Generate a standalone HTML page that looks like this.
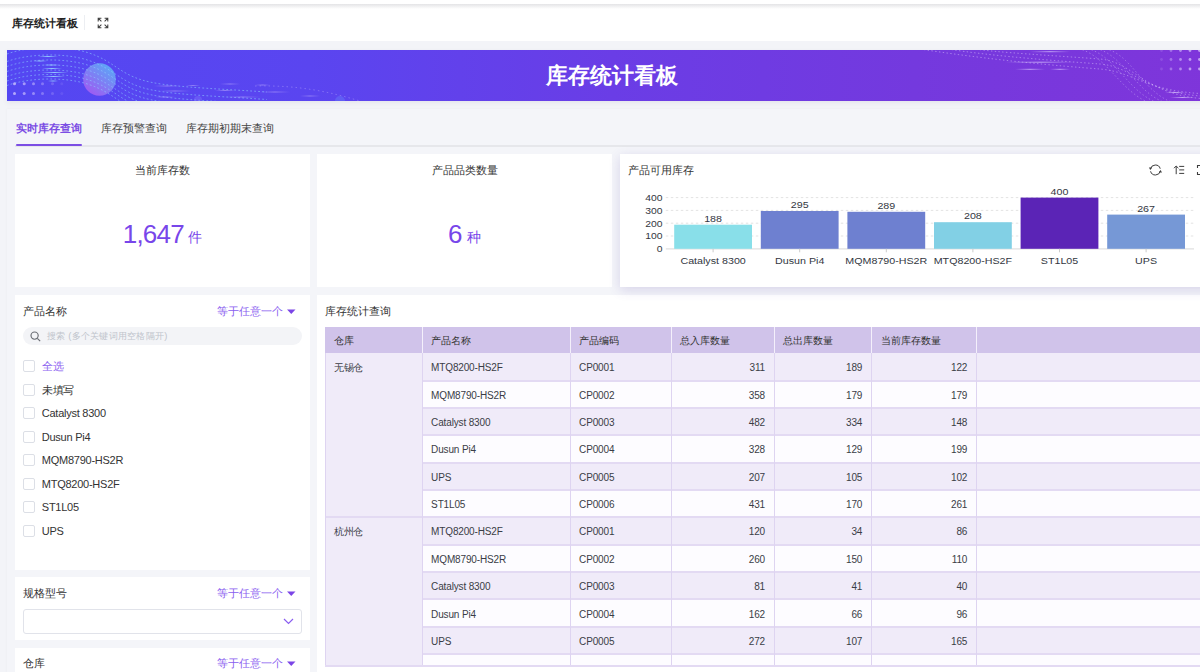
<!DOCTYPE html>
<html><head><meta charset="utf-8">
<style>
*{margin:0;padding:0;box-sizing:border-box}
html,body{width:1200px;height:672px;overflow:hidden}
body{position:relative;background:#f3f4f8;font-family:"Liberation Sans",sans-serif;color:#333}
.a{position:absolute}
.hdr{left:0;top:0;width:1200px;height:41px;background:#fff}
.hdr .sh{left:0;top:4px;width:1200px;height:5px;background:linear-gradient(#e4e4e6,#fff)}
.htitle{left:12px;top:14.5px;font-size:11px;font-weight:bold;color:#222;line-height:16px;white-space:nowrap}
.hdiv{left:84px;top:15px;width:1px;height:15px;background:#eceef2}
.banner{left:7px;top:50px;width:1210px;height:51px;background:linear-gradient(90deg,#5447f2 0%,#5a45f0 25%,#6a3de6 50%,#7439de 75%,#7f35da 100%);overflow:hidden;box-shadow:0 2px 5px rgba(60,60,90,.08)}
.btitle{left:0;top:0;width:1210px;text-align:center;line-height:51px;font-size:22px;font-weight:bold;color:#fff;letter-spacing:0}
.panel{left:7px;top:108.5px;width:1200px;height:570px;background:#f4f5f9;box-shadow:0 0 3px rgba(0,0,0,.04)}
.tab{top:120px;font-size:11px;line-height:16px;color:#444;white-space:nowrap}
.tabline{left:15px;top:145px;width:1190px;height:2px;background:#e6e7eb}
.tabact{left:16px;top:144px;width:66px;height:2px;background:#7c4ee4;border-radius:1px}
.card{background:#fff}
.ctitle{font-size:11px;line-height:16px;color:#333;text-align:center;white-space:nowrap}
.big{color:#7846ea;white-space:nowrap;text-align:center}


.tbl{overflow:hidden}
.th{background:#d0c3ea}
.tht{font-size:10px;line-height:26.2px;color:#333;white-space:nowrap;padding-top:1.5px;margin-left:-0.5px}
.thd{width:1px;background:#f4f0fb}
.td{font-size:10px;line-height:27.4px;color:#3a3d46;white-space:nowrap;letter-spacing:-0.15px;padding-top:1.5px}
.num{text-align:right}
.hl{height:2px;background:#e3daf3}
.vl{width:1px;background:#ded4f1}
.cb{width:12px;height:12px;border:1px solid #dcdfe6;border-radius:2px;background:#fff}
.ci{font-size:11px;line-height:16px;color:#333;white-space:nowrap;letter-spacing:-0.25px}
.ftitle{font-size:11px;line-height:16px;color:#333;white-space:nowrap}
.fop{font-size:11px;line-height:16px;color:#8a5ef0;white-space:nowrap}
.purple{color:#8a5ef0!important}
.td:not(.num){margin-left:-0.7px}
</style></head><body>
<div class="a hdr">
  <div class="a sh"></div>
  <div class="a htitle">库存统计看板</div>
  <div class="a hdiv"></div>
  <svg class="a" style="left:97px;top:16.8px" width="12" height="12" viewBox="0 0 12 12" fill="none" stroke="#404040" stroke-width="1.05">
    <path d="M1.2 4.4V1.2h3.2M1.4 1.4l3 3M10.8 4.4V1.2H7.6M10.6 1.4l-3 3M1.2 7.6v3.2h3.2M1.4 10.6l3-3M10.8 7.6v3.2H7.6M10.6 10.6l-3-3"/>
  </svg>
</div>

<div class="a banner">
<svg class="a" style="left:0;top:0" width="1210" height="51" viewBox="0 0 1210 51">
<defs><linearGradient id="sph" x1="0.8" y1="0.1" x2="0.2" y2="0.9"><stop offset="0" stop-color="#5ea4f6"/><stop offset="1" stop-color="#9d5cf2"/></linearGradient><linearGradient id="stk" x1="0" x2="1"><stop offset="0" stop-color="#9ad8ff" stop-opacity="0"/><stop offset="0.5" stop-color="#9ad8ff" stop-opacity="0.9"/><stop offset="1" stop-color="#9ad8ff" stop-opacity="0"/></linearGradient><linearGradient id="stk2" x1="0" x2="1"><stop offset="0" stop-color="#d8c8ff" stop-opacity="0"/><stop offset="0.5" stop-color="#e0d0ff" stop-opacity="0.7"/><stop offset="1" stop-color="#d8c8ff" stop-opacity="0"/></linearGradient></defs>
<circle cx="92.5" cy="29.5" r="16.3" fill="url(#sph)"/>
<path d="M0 4.0 C 22 -4.0, 58 -5.0, 82 3.0 S 112 23.0, 135 30.0 S 200 38.0, 260 42.0" fill="none" stroke="#8fd2ff" stroke-opacity="0.6" stroke-width="0.9" stroke-dasharray="1.8 2.2"/>
<path d="M0 11.5 C 22 3.5, 58 2.5, 82 10.5 S 112 30.5, 135 37.5 S 200 45.5, 260 49.5" fill="none" stroke="#8fd2ff" stroke-opacity="0.6" stroke-width="0.9" stroke-dasharray="1.8 2.2"/>
<path d="M0 16.5 C 22 8.5, 58 7.5, 82 15.5 S 112 35.5, 135 42.5 S 200 50.5, 260 54.5" fill="none" stroke="#8fd2ff" stroke-opacity="0.6" stroke-width="0.9" stroke-dasharray="1.8 2.2"/>
<path d="M0 21.5 C 22 13.5, 58 12.5, 82 20.5 S 112 40.5, 135 47.5 S 200 55.5, 260 59.5" fill="none" stroke="#8fd2ff" stroke-opacity="0.6" stroke-width="0.9" stroke-dasharray="1.8 2.2"/>
<path d="M0 26.5 C 22 18.5, 58 17.5, 82 25.5 S 112 45.5, 135 52.5 S 200 60.5, 260 64.5" fill="none" stroke="#8fd2ff" stroke-opacity="0.6" stroke-width="0.9" stroke-dasharray="1.8 2.2"/>
<path d="M0 31.0 C 22 23.0, 58 22.0, 82 30.0 S 112 50.0, 135 57.0 S 200 65.0, 260 69.0" fill="none" stroke="#8fd2ff" stroke-opacity="0.6" stroke-width="0.9" stroke-dasharray="1.8 2.2"/>
<path d="M0 35.5 C 22 27.5, 58 26.5, 82 34.5 S 112 54.5, 135 61.5 S 200 69.5, 260 73.5" fill="none" stroke="#8fd2ff" stroke-opacity="0.6" stroke-width="0.9" stroke-dasharray="1.8 2.2"/>
<rect x="31" y="6.0" width="20" height="1" fill="url(#stk)"/>
<rect x="26" y="10.5" width="14" height="1" fill="url(#stk)"/>
<rect x="36" y="14.5" width="17" height="1" fill="url(#stk)"/>
<rect x="35" y="18.0" width="20" height="1" fill="url(#stk)"/>
<rect x="34" y="22.0" width="27" height="1" fill="url(#stk)"/>
<rect x="35" y="26.0" width="23" height="1" fill="url(#stk)"/>
<rect x="41" y="30.5" width="10" height="1" fill="url(#stk)"/>
<circle cx="7.5" cy="33.8" r="1.5" fill="#e6dcff" fill-opacity="0.65"/>
<circle cx="17.2" cy="33.8" r="1.5" fill="#e6dcff" fill-opacity="0.55"/>
<circle cx="26.5" cy="33.8" r="1.5" fill="#e6dcff" fill-opacity="0.45"/>
<circle cx="35.5" cy="33.8" r="1.5" fill="#e6dcff" fill-opacity="0.32"/>
<circle cx="45.5" cy="33.8" r="1.5" fill="#e6dcff" fill-opacity="0.2"/>
<circle cx="54.8" cy="33.8" r="1.5" fill="#e6dcff" fill-opacity="0.1"/>
<circle cx="7.5" cy="43.5" r="1.5" fill="#e6dcff" fill-opacity="0.65"/>
<circle cx="17.2" cy="43.5" r="1.5" fill="#e6dcff" fill-opacity="0.55"/>
<circle cx="26.5" cy="43.5" r="1.5" fill="#e6dcff" fill-opacity="0.45"/>
<circle cx="35.5" cy="43.5" r="1.5" fill="#e6dcff" fill-opacity="0.32"/>
<circle cx="45.5" cy="43.5" r="1.5" fill="#e6dcff" fill-opacity="0.2"/>
<circle cx="54.8" cy="43.5" r="1.5" fill="#e6dcff" fill-opacity="0.1"/>
<rect x="147" y="35.5" width="26" height="1" fill="url(#stk2)" opacity="0.6"/>
<rect x="179" y="35.0" width="14" height="1" fill="url(#stk2)" opacity="0.6"/>
<rect x="213" y="33.5" width="20" height="1" fill="url(#stk2)" opacity="0.6"/>
<rect x="248" y="34.5" width="15" height="1" fill="url(#stk2)" opacity="0.6"/>
<rect x="153" y="40.5" width="30" height="1" fill="url(#stk2)" opacity="0.6"/>
<rect x="208" y="40.0" width="20" height="1" fill="url(#stk2)" opacity="0.6"/>
<rect x="253" y="41.5" width="30" height="1" fill="url(#stk2)" opacity="0.6"/>
<rect x="148" y="46.5" width="20" height="1" fill="url(#stk2)" opacity="0.6"/>
<rect x="218" y="46.5" width="35" height="1" fill="url(#stk2)" opacity="0.6"/>
<rect x="293" y="45.5" width="20" height="1" fill="url(#stk2)" opacity="0.6"/>
<path d="M248 36 C 293 35, 323 42, 353 51" fill="none" stroke="#c8b8ff" stroke-opacity="0.45" stroke-width="0.8" stroke-dasharray="1.5 3"/>
<circle cx="191" cy="50" r="4" fill="#8a7cff" fill-opacity="0.35"/>
<circle cx="333" cy="51" r="5" fill="#6a8cff" fill-opacity="0.35"/>
<path d="M913 -1 C 983 10, 1053 16, 1093 19 C 1128 22, 1138 42.0, 1203 44.0" fill="none" stroke="#e6d8ff" stroke-opacity="0.55" stroke-width="0.8" stroke-dasharray="1.4 2.4"/>
<path d="M941 -1 C 983 6, 1053 11, 1093 14 C 1128 17, 1138 44.5, 1203 46.5" fill="none" stroke="#e6d8ff" stroke-opacity="0.55" stroke-width="0.8" stroke-dasharray="1.4 2.4"/>
<path d="M969 -1 C 983 2, 1053 6, 1093 9 C 1128 12, 1138 47.0, 1203 49.0" fill="none" stroke="#e6d8ff" stroke-opacity="0.55" stroke-width="0.8" stroke-dasharray="1.4 2.4"/>
<path d="M1068 -2 C 1098 2, 1113 42, 1143 53" fill="none" stroke="#e6d8ff" stroke-opacity="0.45" stroke-width="0.8" stroke-dasharray="1.4 2.4"/>
<path d="M1077 -2 C 1107 2, 1120 42, 1151 53" fill="none" stroke="#e6d8ff" stroke-opacity="0.45" stroke-width="0.8" stroke-dasharray="1.4 2.4"/>
<path d="M1086 -2 C 1116 2, 1127 42, 1159 53" fill="none" stroke="#e6d8ff" stroke-opacity="0.45" stroke-width="0.8" stroke-dasharray="1.4 2.4"/>
<path d="M1095 -2 C 1125 2, 1134 42, 1167 53" fill="none" stroke="#e6d8ff" stroke-opacity="0.45" stroke-width="0.8" stroke-dasharray="1.4 2.4"/>
<rect x="1023" y="1.2" width="40" height="1" fill="url(#stk2)"/>
<rect x="998" y="11.7" width="70" height="1" fill="url(#stk2)"/>
<rect x="1008" y="18.8" width="30" height="1" fill="url(#stk2)"/>
<rect x="1043" y="18.8" width="20" height="1" fill="url(#stk2)"/>
<rect x="1158" y="42.0" width="20" height="1" fill="url(#stk2)"/>
<rect x="1163" y="47.0" width="25" height="1" fill="url(#stk2)"/>
<circle cx="1154.5" cy="0.5" r="1.4" fill="#e8dcff" fill-opacity="0.15"/>
<circle cx="1164" cy="0.5" r="1.4" fill="#e8dcff" fill-opacity="0.35"/>
<circle cx="1173.5" cy="0.5" r="1.4" fill="#e8dcff" fill-opacity="0.5"/>
<circle cx="1183" cy="0.5" r="1.4" fill="#e8dcff" fill-opacity="0.6"/>
<circle cx="1192.5" cy="0.5" r="1.4" fill="#e8dcff" fill-opacity="0.65"/>
<circle cx="1154.5" cy="9.5" r="1.4" fill="#e8dcff" fill-opacity="0.15"/>
<circle cx="1164" cy="9.5" r="1.4" fill="#e8dcff" fill-opacity="0.35"/>
<circle cx="1173.5" cy="9.5" r="1.4" fill="#e8dcff" fill-opacity="0.5"/>
<circle cx="1183" cy="9.5" r="1.4" fill="#e8dcff" fill-opacity="0.6"/>
<circle cx="1192.5" cy="9.5" r="1.4" fill="#e8dcff" fill-opacity="0.65"/>
<circle cx="1154.5" cy="19" r="1.4" fill="#e8dcff" fill-opacity="0.15"/>
<circle cx="1164" cy="19" r="1.4" fill="#e8dcff" fill-opacity="0.35"/>
<circle cx="1173.5" cy="19" r="1.4" fill="#e8dcff" fill-opacity="0.5"/>
<circle cx="1183" cy="19" r="1.4" fill="#e8dcff" fill-opacity="0.6"/>
<circle cx="1192.5" cy="19" r="1.4" fill="#e8dcff" fill-opacity="0.65"/>
</svg>
  <div class="a btitle">库存统计看板</div>
</div>

<div class="a panel"></div>
<div class="a tab" style="left:16px;color:#7c4ee4;font-weight:bold">实时库存查询</div>
<div class="a tab" style="left:101px">库存预警查询</div>
<div class="a tab" style="left:186px">库存期初期末查询</div>
<div class="a tabline"></div>
<div class="a tabact"></div>

<!-- card 1 -->
<div class="a card" style="left:15px;top:154px;width:295px;height:133px">
  <div class="a ctitle" style="left:0;top:8px;width:295px">当前库存数</div>
  <div class="a big" style="left:0;top:65px;width:295px"><span style="font-size:26px;letter-spacing:-0.8px">1,647</span> <span style="font-size:14px;position:relative;top:-1px">件</span></div>
</div>
<!-- card 2 -->
<div class="a card" style="left:317px;top:154px;width:295px;height:133px">
  <div class="a ctitle" style="left:0;top:8px;width:295px">产品品类数量</div>
  <div class="a big" style="left:0;top:65px;width:295px"><span style="font-size:26px">6</span> <span style="font-size:14px;position:relative;top:-1px">种</span></div>
</div>
<!-- chart card -->
<div class="a card" style="left:620px;top:154px;width:600px;height:133px;box-shadow:0 3px 11px rgba(90,70,170,.19);z-index:2">
  <div class="a" style="left:8px;top:8px;font-size:11px;line-height:16px;white-space:nowrap">产品可用库存</div>
<svg class="a" style="left:0;top:0" width="600" height="133" font-family="Liberation Sans, sans-serif" fill="#33373f">
<line x1="45.799999999999955" x2="574" y1="43.6" y2="43.6" stroke="#e3e3e3" stroke-width="1" stroke-dasharray="2.5 2.5"/>
<line x1="45.799999999999955" x2="574" y1="56.4" y2="56.4" stroke="#e3e3e3" stroke-width="1" stroke-dasharray="2.5 2.5"/>
<line x1="45.799999999999955" x2="574" y1="69.2" y2="69.2" stroke="#e3e3e3" stroke-width="1" stroke-dasharray="2.5 2.5"/>
<line x1="45.799999999999955" x2="574" y1="82.0" y2="82.0" stroke="#e3e3e3" stroke-width="1" stroke-dasharray="2.5 2.5"/>
<text transform="translate(42.60000000000002,47.0) scale(1.08,1)" text-anchor="end" font-size="9.6">400</text>
<text transform="translate(42.60000000000002,59.8) scale(1.08,1)" text-anchor="end" font-size="9.6">300</text>
<text transform="translate(42.60000000000002,72.6) scale(1.08,1)" text-anchor="end" font-size="9.6">200</text>
<text transform="translate(42.60000000000002,85.4) scale(1.08,1)" text-anchor="end" font-size="9.6">100</text>
<text transform="translate(42.60000000000002,98.2) scale(1.08,1)" text-anchor="end" font-size="9.6">0</text>
<line x1="45.799999999999955" x2="574" y1="94.8" y2="94.8" stroke="#e0e0e0" stroke-width="1.3"/>
<rect x="54.2" y="70.7" width="77.8" height="24.1" fill="#89dfe9"/>
<text transform="translate(93.1,67.9) scale(1.08,1)" text-anchor="middle" font-size="9.9">188</text>
<line x1="93.1" x2="93.1" y1="94.8" y2="98.3" stroke="#ccc" stroke-width="1"/>
<text transform="translate(93.1,109.9) scale(1.08,1)" text-anchor="middle" font-size="9.9">Catalyst 8300</text>
<rect x="140.8" y="57.0" width="77.8" height="37.8" fill="#6e80d0"/>
<text transform="translate(179.7,54.2) scale(1.08,1)" text-anchor="middle" font-size="9.9">295</text>
<line x1="179.7" x2="179.7" y1="94.8" y2="98.3" stroke="#ccc" stroke-width="1"/>
<text transform="translate(179.7,109.9) scale(1.08,1)" text-anchor="middle" font-size="9.9">Dusun Pi4</text>
<rect x="227.4" y="57.8" width="77.8" height="37.0" fill="#6e80d0"/>
<text transform="translate(266.3,55.0) scale(1.08,1)" text-anchor="middle" font-size="9.9">289</text>
<line x1="266.3" x2="266.3" y1="94.8" y2="98.3" stroke="#ccc" stroke-width="1"/>
<text transform="translate(266.3,109.9) scale(1.08,1)" text-anchor="middle" font-size="9.9">MQM8790-HS2R</text>
<rect x="314.0" y="68.2" width="77.8" height="26.6" fill="#82d0e5"/>
<text transform="translate(352.9,65.4) scale(1.08,1)" text-anchor="middle" font-size="9.9">208</text>
<line x1="352.9" x2="352.9" y1="94.8" y2="98.3" stroke="#ccc" stroke-width="1"/>
<text transform="translate(352.9,109.9) scale(1.08,1)" text-anchor="middle" font-size="9.9">MTQ8200-HS2F</text>
<rect x="400.6" y="43.6" width="77.8" height="51.2" fill="#5b24b6"/>
<text transform="translate(439.5,40.8) scale(1.08,1)" text-anchor="middle" font-size="9.9">400</text>
<line x1="439.5" x2="439.5" y1="94.8" y2="98.3" stroke="#ccc" stroke-width="1"/>
<text transform="translate(439.5,109.9) scale(1.08,1)" text-anchor="middle" font-size="9.9">ST1L05</text>
<rect x="487.2" y="60.6" width="77.8" height="34.2" fill="#7698d6"/>
<text transform="translate(526.1,57.8) scale(1.08,1)" text-anchor="middle" font-size="9.9">267</text>
<line x1="526.1" x2="526.1" y1="94.8" y2="98.3" stroke="#ccc" stroke-width="1"/>
<text transform="translate(526.1,109.9) scale(1.08,1)" text-anchor="middle" font-size="9.9">UPS</text>
</svg>
</div>


<svg class="a" style="left:1148px;top:163px;z-index:3" width="15" height="14" viewBox="0 0 15 14" fill="none" stroke="#3d3d3d" stroke-width="1">
  <path d="M2.48 6.13 A5 5 0 0 1 12.23 5.71"/>
  <path d="M12.32 7.87 A5 5 0 0 1 2.57 8.29"/>
  <path d="M0.9 4.6 L4 4.4 L2.3 6.9 Z" fill="#3d3d3d" stroke="none"/>
  <path d="M14 9.4 L10.9 9.6 L12.6 7.1 Z" fill="#3d3d3d" stroke="none"/>
</svg>
<svg class="a" style="left:1172px;top:164px;z-index:3" width="14" height="12" viewBox="0 0 14 12" fill="none" stroke="#3d3d3d" stroke-width="1">
  <path d="M4.2 10.2V2.2M2 4.2L4.2 2L6.4 4.2"/>
  <path d="M7.2 2.4h5M7.2 5.9h5M7.2 9.4h5"/>
</svg>
<svg class="a" style="left:1196px;top:164px;z-index:3" width="8" height="12" viewBox="0 0 8 12" fill="none" stroke="#3d3d3d" stroke-width="1.1">
  <path d="M1.5 4V1.5h3M1.5 8v2.5h3"/>
</svg>
<!-- filter panels -->
<div class="a card" style="left:15px;top:295px;width:295px;height:275px"></div>
<div class="a card" style="left:15px;top:577px;width:295px;height:63px"></div>
<div class="a card" style="left:15px;top:648px;width:295px;height:40px"></div>

<!-- table panel -->
<div class="a card" style="left:317px;top:295px;width:900px;height:390px"></div>


<!-- filter 1 -->
<div class="a ftitle" style="left:23px;top:303px">产品名称</div>
<div class="a fop" style="left:217px;top:303px">等于任意一个</div>
<svg class="a" style="left:287px;top:309px" width="9" height="6" viewBox="0 0 9 6"><path d="M0 0.5h8.5L4.25 5z" fill="#7b45e6"/></svg>
<div class="a" style="left:23px;top:327px;width:278.5px;height:18px;border-radius:9px;background:#f3f4f7"></div>
<svg class="a" style="left:30px;top:331px" width="11" height="11" viewBox="0 0 11 11" fill="none" stroke="#6a6d74" stroke-width="1.15"><circle cx="4.6" cy="4.6" r="3.6"/><path d="M7.3 7.3l2.9 2.9"/></svg>
<div class="a" style="left:47px;top:328.5px;font-size:9.4px;line-height:14px;color:#c0c4cc;letter-spacing:0.25px;white-space:nowrap">搜索 (多个关键词用空格隔开)</div>
<div class="a cb" style="left:23px;top:360.0px"></div>
<div class="a ci purple" style="left:41.8px;top:358.0px">全选</div>
<div class="a cb" style="left:23px;top:383.5px"></div>
<div class="a ci" style="left:41.8px;top:381.5px">未填写</div>
<div class="a cb" style="left:23px;top:407.0px"></div>
<div class="a ci" style="left:41.8px;top:405.0px">Catalyst 8300</div>
<div class="a cb" style="left:23px;top:430.5px"></div>
<div class="a ci" style="left:41.8px;top:428.5px">Dusun Pi4</div>
<div class="a cb" style="left:23px;top:454.0px"></div>
<div class="a ci" style="left:41.8px;top:452.0px">MQM8790-HS2R</div>
<div class="a cb" style="left:23px;top:477.5px"></div>
<div class="a ci" style="left:41.8px;top:475.5px">MTQ8200-HS2F</div>
<div class="a cb" style="left:23px;top:501.0px"></div>
<div class="a ci" style="left:41.8px;top:499.0px">ST1L05</div>
<div class="a cb" style="left:23px;top:524.5px"></div>
<div class="a ci" style="left:41.8px;top:522.5px">UPS</div>
<!-- filter 2 -->
<div class="a ftitle" style="left:23px;top:585px">规格型号</div>
<div class="a fop" style="left:217px;top:585px">等于任意一个</div>
<svg class="a" style="left:287px;top:591px" width="9" height="6" viewBox="0 0 9 6"><path d="M0 0.5h8.5L4.25 5z" fill="#7b45e6"/></svg>
<div class="a" style="left:23px;top:608.5px;width:278.5px;height:25px;border-radius:3px;border:1px solid #e1e3ea;background:#fff"></div>
<svg class="a" style="left:283px;top:618px" width="11" height="7" viewBox="0 0 11 7" fill="none" stroke="#8a5ef0" stroke-width="1.2"><path d="M1 1l4.5 4.5L10 1"/></svg>
<!-- filter 3 -->
<div class="a ftitle" style="left:23px;top:655px">仓库</div>
<div class="a fop" style="left:217px;top:655px">等于任意一个</div>
<svg class="a" style="left:287px;top:661px" width="9" height="6" viewBox="0 0 9 6"><path d="M0 0.5h8.5L4.25 5z" fill="#7b45e6"/></svg>
<!-- table -->
<div class="a" style="left:325px;top:303px;font-size:11px;line-height:16px;color:#333;white-space:nowrap">库存统计查询</div>
<div class="a tbl" style="left:325px;top:326.7px;width:885px;height:340.3px">
<div class="a th" style="left:0;top:0;width:885px;height:26.2px"></div>
<div class="a tht" style="left:9.4px;top:0;height:26.2px">仓库</div>
<div class="a tht" style="left:106.8px;top:0;height:26.2px">产品名称</div>
<div class="a tht" style="left:254.8px;top:0;height:26.2px">产品编码</div>
<div class="a tht" style="left:355.9px;top:0;height:26.2px">总入库数量</div>
<div class="a tht" style="left:458.8px;top:0;height:26.2px">总出库数量</div>
<div class="a tht" style="left:556.1px;top:0;height:26.2px">当前库存数量</div>
<div class="a thd" style="left:96.9px;top:0;height:26.2px"></div>
<div class="a thd" style="left:244.9px;top:0;height:26.2px"></div>
<div class="a thd" style="left:346.0px;top:0;height:26.2px"></div>
<div class="a thd" style="left:448.9px;top:0;height:26.2px"></div>
<div class="a thd" style="left:546.2px;top:0;height:26.2px"></div>
<div class="a thd" style="left:651.2px;top:0;height:26.2px"></div>
<div class="a tr" style="left:97.4px;top:26.20px;width:787.6px;height:27.35px;background:#f0ebf9"></div>
<div class="a td" style="left:106.8px;top:26.20px;height:27.35px">MTQ8200-HS2F</div>
<div class="a td" style="left:254.8px;top:26.20px;height:27.35px">CP0001</div>
<div class="a td num" style="left:346.5px;top:26.20px;width:93.5px;height:27.35px">311</div>
<div class="a td num" style="left:449.4px;top:26.20px;width:87.9px;height:27.35px">189</div>
<div class="a td num" style="left:546.7px;top:26.20px;width:95.6px;height:27.35px">122</div>
<div class="a tr" style="left:97.4px;top:53.55px;width:787.6px;height:27.35px;background:#fdfcff"></div>
<div class="a td" style="left:106.8px;top:53.55px;height:27.35px">MQM8790-HS2R</div>
<div class="a td" style="left:254.8px;top:53.55px;height:27.35px">CP0002</div>
<div class="a td num" style="left:346.5px;top:53.55px;width:93.5px;height:27.35px">358</div>
<div class="a td num" style="left:449.4px;top:53.55px;width:87.9px;height:27.35px">179</div>
<div class="a td num" style="left:546.7px;top:53.55px;width:95.6px;height:27.35px">179</div>
<div class="a tr" style="left:97.4px;top:80.90px;width:787.6px;height:27.35px;background:#f0ebf9"></div>
<div class="a td" style="left:106.8px;top:80.90px;height:27.35px">Catalyst 8300</div>
<div class="a td" style="left:254.8px;top:80.90px;height:27.35px">CP0003</div>
<div class="a td num" style="left:346.5px;top:80.90px;width:93.5px;height:27.35px">482</div>
<div class="a td num" style="left:449.4px;top:80.90px;width:87.9px;height:27.35px">334</div>
<div class="a td num" style="left:546.7px;top:80.90px;width:95.6px;height:27.35px">148</div>
<div class="a tr" style="left:97.4px;top:108.25px;width:787.6px;height:27.35px;background:#fdfcff"></div>
<div class="a td" style="left:106.8px;top:108.25px;height:27.35px">Dusun Pi4</div>
<div class="a td" style="left:254.8px;top:108.25px;height:27.35px">CP0004</div>
<div class="a td num" style="left:346.5px;top:108.25px;width:93.5px;height:27.35px">328</div>
<div class="a td num" style="left:449.4px;top:108.25px;width:87.9px;height:27.35px">129</div>
<div class="a td num" style="left:546.7px;top:108.25px;width:95.6px;height:27.35px">199</div>
<div class="a tr" style="left:97.4px;top:135.60px;width:787.6px;height:27.35px;background:#f0ebf9"></div>
<div class="a td" style="left:106.8px;top:135.60px;height:27.35px">UPS</div>
<div class="a td" style="left:254.8px;top:135.60px;height:27.35px">CP0005</div>
<div class="a td num" style="left:346.5px;top:135.60px;width:93.5px;height:27.35px">207</div>
<div class="a td num" style="left:449.4px;top:135.60px;width:87.9px;height:27.35px">105</div>
<div class="a td num" style="left:546.7px;top:135.60px;width:95.6px;height:27.35px">102</div>
<div class="a tr" style="left:97.4px;top:162.95px;width:787.6px;height:27.35px;background:#fdfcff"></div>
<div class="a td" style="left:106.8px;top:162.95px;height:27.35px">ST1L05</div>
<div class="a td" style="left:254.8px;top:162.95px;height:27.35px">CP0006</div>
<div class="a td num" style="left:346.5px;top:162.95px;width:93.5px;height:27.35px">431</div>
<div class="a td num" style="left:449.4px;top:162.95px;width:87.9px;height:27.35px">170</div>
<div class="a td num" style="left:546.7px;top:162.95px;width:95.6px;height:27.35px">261</div>
<div class="a tr" style="left:97.4px;top:190.30px;width:787.6px;height:27.35px;background:#f0ebf9"></div>
<div class="a td" style="left:106.8px;top:190.30px;height:27.35px">MTQ8200-HS2F</div>
<div class="a td" style="left:254.8px;top:190.30px;height:27.35px">CP0001</div>
<div class="a td num" style="left:346.5px;top:190.30px;width:93.5px;height:27.35px">120</div>
<div class="a td num" style="left:449.4px;top:190.30px;width:87.9px;height:27.35px">34</div>
<div class="a td num" style="left:546.7px;top:190.30px;width:95.6px;height:27.35px">86</div>
<div class="a tr" style="left:97.4px;top:217.65px;width:787.6px;height:27.35px;background:#fdfcff"></div>
<div class="a td" style="left:106.8px;top:217.65px;height:27.35px">MQM8790-HS2R</div>
<div class="a td" style="left:254.8px;top:217.65px;height:27.35px">CP0002</div>
<div class="a td num" style="left:346.5px;top:217.65px;width:93.5px;height:27.35px">260</div>
<div class="a td num" style="left:449.4px;top:217.65px;width:87.9px;height:27.35px">150</div>
<div class="a td num" style="left:546.7px;top:217.65px;width:95.6px;height:27.35px">110</div>
<div class="a tr" style="left:97.4px;top:245.00px;width:787.6px;height:27.35px;background:#f0ebf9"></div>
<div class="a td" style="left:106.8px;top:245.00px;height:27.35px">Catalyst 8300</div>
<div class="a td" style="left:254.8px;top:245.00px;height:27.35px">CP0003</div>
<div class="a td num" style="left:346.5px;top:245.00px;width:93.5px;height:27.35px">81</div>
<div class="a td num" style="left:449.4px;top:245.00px;width:87.9px;height:27.35px">41</div>
<div class="a td num" style="left:546.7px;top:245.00px;width:95.6px;height:27.35px">40</div>
<div class="a tr" style="left:97.4px;top:272.35px;width:787.6px;height:27.35px;background:#fdfcff"></div>
<div class="a td" style="left:106.8px;top:272.35px;height:27.35px">Dusun Pi4</div>
<div class="a td" style="left:254.8px;top:272.35px;height:27.35px">CP0004</div>
<div class="a td num" style="left:346.5px;top:272.35px;width:93.5px;height:27.35px">162</div>
<div class="a td num" style="left:449.4px;top:272.35px;width:87.9px;height:27.35px">66</div>
<div class="a td num" style="left:546.7px;top:272.35px;width:95.6px;height:27.35px">96</div>
<div class="a tr" style="left:97.4px;top:299.70px;width:787.6px;height:27.35px;background:#f0ebf9"></div>
<div class="a td" style="left:106.8px;top:299.70px;height:27.35px">UPS</div>
<div class="a td" style="left:254.8px;top:299.70px;height:27.35px">CP0005</div>
<div class="a td num" style="left:346.5px;top:299.70px;width:93.5px;height:27.35px">272</div>
<div class="a td num" style="left:449.4px;top:299.70px;width:87.9px;height:27.35px">107</div>
<div class="a td num" style="left:546.7px;top:299.70px;width:95.6px;height:27.35px">165</div>
<div class="a tr" style="left:97.4px;top:327.05px;width:787.6px;height:27.35px;background:#fdfcff"></div>
<div class="a tr" style="left:0;top:26.20px;width:97.4px;height:164.10px;background:#f0ebf9"></div>
<div class="a td" style="left:9.4px;top:26.20px;height:27.35px">无锡仓</div>
<div class="a tr" style="left:0;top:190.30px;width:97.4px;height:164.10px;background:#f0ebf9"></div>
<div class="a td" style="left:9.4px;top:190.30px;height:27.35px">杭州仓</div>
<div class="a hl" style="left:97.4px;top:53.30px;width:787.6px"></div>
<div class="a hl" style="left:97.4px;top:80.30px;width:787.6px"></div>
<div class="a hl" style="left:97.4px;top:107.30px;width:787.6px"></div>
<div class="a hl" style="left:97.4px;top:135.30px;width:787.6px"></div>
<div class="a hl" style="left:97.4px;top:162.30px;width:787.6px"></div>
<div class="a hl" style="left:0.0px;top:189.30px;width:885.0px"></div>
<div class="a hl" style="left:97.4px;top:217.30px;width:787.6px"></div>
<div class="a hl" style="left:97.4px;top:244.30px;width:787.6px"></div>
<div class="a hl" style="left:97.4px;top:271.30px;width:787.6px"></div>
<div class="a hl" style="left:97.4px;top:299.30px;width:787.6px"></div>
<div class="a hl" style="left:97.4px;top:326.30px;width:787.6px"></div>
<div class="a hl" style="left:0.0px;top:353.30px;width:885.0px"></div>
<div class="a vl" style="left:96.9px;top:26.2px;height:313.6px"></div>
<div class="a vl" style="left:244.9px;top:26.2px;height:313.6px"></div>
<div class="a vl" style="left:346.0px;top:26.2px;height:313.6px"></div>
<div class="a vl" style="left:448.9px;top:26.2px;height:313.6px"></div>
<div class="a vl" style="left:546.2px;top:26.2px;height:313.6px"></div>
<div class="a vl" style="left:651.2px;top:26.2px;height:313.6px"></div>
<div class="a vl" style="left:0;top:26.2px;height:313.6px"></div>
<div class="a hl" style="left:0;top:338.3px;width:885px;height:2px"></div>
</div>
</body></html>
